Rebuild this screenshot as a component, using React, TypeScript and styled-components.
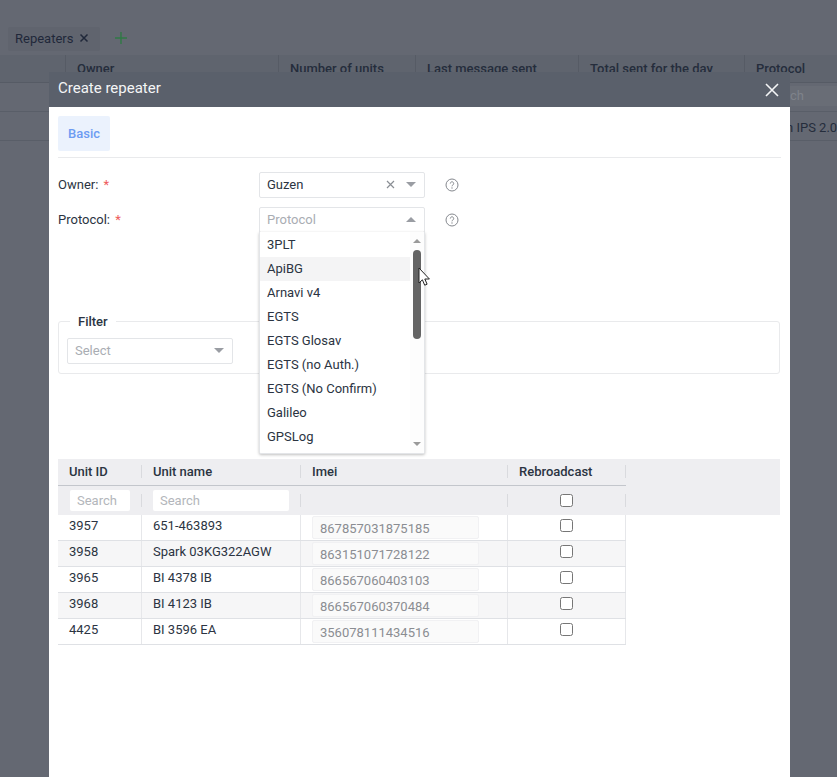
import React from 'react';
import styled, { createGlobalStyle } from 'styled-components';

const GlobalStyle = createGlobalStyle`
    html, body { margin: 0; padding: 0; height: 100%; }
    body { font-family: Roboto, "Liberation Sans", sans-serif; font-size: 13px; overflow: hidden; }
`;

const Page = styled.div`
    position: relative;
    width: 837px;
    height: 777px;
    overflow: hidden;
    background: #646872;
    color: #2b3442;
    padding-top: 27px;
    box-sizing: border-box;
`;

/* ---- dimmed page behind the dialog ---- */
const TabBar = styled.div`
    display: flex;
    align-items: center;
    height: 24px;
    padding-left: 8px;
    margin-bottom: 4px;
`;

const Tab = styled.div`
    display: flex;
    align-items: center;
    gap: 6px;
    height: 24px;
    width: 92px;
    box-sizing: border-box;
    padding: 0 0 2px 7px;
    background: #60646e;
    border-radius: 2px;
    font-size: 13px;
    color: #20283a;
`;

const AddButton = styled.div`
    margin: -2px 0 0 15px;
    display: flex;
`;

const BackHead = styled.div`
    display: grid;
    grid-template-columns: 65px 213px 137px 163px 166px 1fr;
    height: 27px;
    background: #5f646e;
    border-bottom: 1px solid #565b65;
`;

const BackHeadCell = styled.div`
    padding: 6px 0 0 11px;
    font-size: 13px;
    font-weight: 500;
    color: #252d3c;
    border-left: 1px solid #565b65;
    &:first-child { border-left: none; }
`;

const BackRow = styled.div`
    height: ${p => p.$h}px;
    box-sizing: border-box;
    border-bottom: 1px solid #595e68;
`;

const BackSearch = styled.div`
    margin-left: 755px;
    margin-top: 3px;
    height: 20px;
    width: 82px;
    background: #696d76;
    font-size: 13px;
    line-height: 20px;
    color: #7f838b;
    padding-left: 35px;
    box-sizing: border-box;
`;

const BackCell = styled.div`
    padding: 8px 0 0 786px;
    font-size: 13px;
    white-space: nowrap;
    color: #252d3c;
`;

/* ---- dialog ---- */
const Dialog = styled.div`
    position: absolute;
    left: 49px;
    top: 72px;
    width: 741px;
    bottom: 0;
    display: flex;
    flex-direction: column;
`;

const DialogHeader = styled.div`
    display: flex;
    align-items: center;
    justify-content: space-between;
    height: 35px;
    flex-shrink: 0;
    box-sizing: border-box;
    padding: 0 11px 3px 9px;
    background: #5a606b;
    color: #f4f5f6;
    font-size: 15px;
`;

const CloseIcon = styled.svg`
    display: block;
    margin-top: 3px;
`;

const DialogBody = styled.div`
    position: relative;
    flex: 1;
    background: #fff;
    padding: 9px 9px 0;
`;

const TabStrip = styled.div`
    height: 41px;
    border-bottom: 1px solid #e9eaec;
`;

const BasicTab = styled.div`
    display: inline-flex;
    align-items: center;
    justify-content: center;
    width: 52px;
    height: 35px;
    background: #ebf2fd;
    border-radius: 2px;
    color: #6d9cf2;
    font-size: 13px;
    font-weight: 500;
`;

const FormRow = styled.div`
    display: flex;
    align-items: center;
    height: 26px;
    margin-top: ${p => p.$top}px;
`;

const Label = styled.div`
    width: 201px;
    flex-shrink: 0;
    font-size: 13px;
    color: #2b3442;
    margin-top: -2px;
    span { color: #ee5b5b; margin-left: 2px; }
`;

const SelectBox = styled.div`
    display: flex;
    align-items: center;
    width: ${p => p.$w}px;
    height: 26px;
    box-sizing: border-box;
    padding: 0 8px 1px 7px;
    border: 1px solid #e3e5e8;
    border-radius: 2px;
    background: #fff;
    font-size: 13px;
    color: ${p => (p.$placeholder ? '#a9adb3' : '#2b3442')};
`;

const SelectText = styled.div`
    flex: 1;
`;

const ClearMark = styled.svg`
    margin-right: 11px;
    display: block;
`;

const Caret = styled.div`
    width: 0;
    height: 0;
    border-left: 5px solid transparent;
    border-right: 5px solid transparent;
    ${p => (p.$up ? 'border-bottom: 5px solid #9a9da3;' : 'border-top: 5px solid #9a9da3;')}
`;

const HelpIcon = styled.svg`
    display: block;
    margin-left: 20px;
`;

const FilterSet = styled.fieldset`
    margin: 81px 0 0;
    padding: 0 8px;
    height: 60px;
    box-sizing: border-box;
    width: 722px;
    border: 1px solid #e9eaec;
    border-radius: 3px;
    legend {
        margin-left: 3px;
        padding: 0 8px;
        font-size: 13px;
        font-weight: 500;
        color: #2b3442;
        line-height: 15px;
    }
`;

const FilterInner = styled.div`
    margin-top: 9px;
`;

/* ---- open dropdown ---- */
const Dropdown = styled.div`
    position: absolute;
    left: 210px;
    top: 125px;
    width: 166px;
    height: 222px;
    box-sizing: border-box;
    background: #fff;
    border: 1px solid #e3e5e8;
    border-top: none;
    border-radius: 0 0 2px 2px;
    box-shadow: 0 1px 3px rgba(0, 0, 0, 0.25);
`;

const Option = styled.div`
    height: 24px;
    line-height: 24px;
    width: 151px;
    padding-left: 7px;
    box-sizing: border-box;
    font-size: 13px;
    color: #2b3442;
    background: ${p => (p.$hover ? '#f4f4f5' : 'transparent')};
`;

const OptionList = styled.div`
    padding-top: 1px;
`;

const ScrollTrack = styled.div`
    position: absolute;
    right: 0;
    top: 0;
    bottom: 0;
    width: 14px;
    background: #fdfdfd;
`;

const ScrollThumb = styled.div`
    position: absolute;
    left: 3px;
    top: 18px;
    width: 8px;
    height: 89px;
    border-radius: 4px;
    background: #646464;
`;

const ScrollArrow = styled.div`
    position: absolute;
    left: 3px;
    ${p => (p.$up ? 'top: 7px; border-bottom: 4px solid #9a9a9a;' : 'bottom: 7px; border-top: 4px solid #9a9a9a;')}
    width: 0;
    height: 0;
    border-left: 4px solid transparent;
    border-right: 4px solid transparent;
`;

const Cursor = styled.svg`
    position: absolute;
    left: 369px;
    top: 160px;
`;

/* ---- units table ---- */
const TableBlock = styled.div`
    margin-top: 85px;
    width: 722px;
`;

const HeadBand = styled.div`
    background: #eeeef1;
    height: 56px;
`;

const Columns = `
    display: grid;
    grid-template-columns: 84px 159px 207px 118px;
    width: 568px;
`;

const HeadRow = styled.div`
    ${Columns}
    height: 27px;
    box-sizing: border-box;
    border-bottom: 1px solid #c3c6cc;
`;

const HeadCell = styled.div`
    display: flex;
    align-items: center;
    padding: 0 0 2px 11px;
    font-size: 13px;
    font-weight: 500;
    color: #2b3442;
    position: relative;
    &::after {
        content: '';
        position: absolute;
        right: 0;
        top: 6px;
        height: 13px;
        width: 1px;
        background: #d9dade;
    }
`;

const FilterRow = styled.div`
    ${Columns}
    height: 29px;
`;

const FilterCell = styled.div`
    position: relative;
    display: flex;
    align-items: center;
    justify-content: ${p => (p.$center ? 'center' : 'flex-start')};
    padding: 0 12px 1px ${p => (p.$first ? 12 : 11)}px;
    &::after {
        content: '';
        position: absolute;
        right: 0;
        top: 8px;
        height: 13px;
        width: 1px;
        background: #d9dade;
    }
`;

const SearchBox = styled.div`
    width: 100%;
    height: 21px;
    line-height: 21px;
    box-sizing: border-box;
    padding-left: 7px;
    background: #fff;
    border-radius: 2px;
    font-size: 13px;
    color: #b3b6bb;
`;

const BodyRow = styled.div`
    ${Columns}
    height: 26px;
    box-sizing: border-box;
    border-bottom: 1px solid #dfe1e5;
    background: ${p => (p.$alt ? '#f6f6f7' : '#fff')};
`;

const BodyCell = styled.div`
    padding: 3px 0 0 11px;
    font-size: 13px;
    color: #2b3442;
    border-right: 1px solid #e6e7ea;
    white-space: nowrap;
`;

const ImeiBox = styled.div`
    margin: -2px 0 0 0;
    width: 167px;
    height: 23px;
    line-height: 23px;
    box-sizing: border-box;
    padding-left: 7px;
    background: #fafafa;
    border: 1px solid #f1f1f3;
    border-radius: 2px;
    font-size: 13px;
    color: #8b8d92;
`;

const CheckCell = styled.div`
    display: flex;
    justify-content: center;
    border-right: 1px solid #e6e7ea;
    padding-top: 4px;
`;

const Check = styled.input.attrs({ type: 'checkbox' })`
    margin: 0;
    width: 13px;
    height: 13px;
    ${p => (p.$head ? 'margin-top: 1px;' : '')}
`;

interface Unit {
    id: string;
    name: string;
    imei: string;
}

const units: Unit[] = [
    { id: '3957', name: '651-463893', imei: '867857031875185' },
    { id: '3958', name: 'Spark 03KG322AGW', imei: '863151071728122' },
    { id: '3965', name: 'BI 4378 IB', imei: '866567060403103' },
    { id: '3968', name: 'BI 4123 IB', imei: '866567060370484' },
    { id: '4425', name: 'BI 3596 EA', imei: '356078111434516' },
];

const protocols = ['3PLT', 'ApiBG', 'Arnavi v4', 'EGTS', 'EGTS Glosav', 'EGTS (no Auth.)', 'EGTS (No Confirm)', 'Galileo', 'GPSLog'];

const Help = () => (
    <HelpIcon width="14" height="14" viewBox="0 0 14 14" fill="none">
        <circle cx="7" cy="7" r="6" stroke="#85888e" strokeWidth="1" />
        <path d="M5.3 5.5a1.7 1.7 0 1 1 2.6 1.45c-.6.4-.9.7-.9 1.35" stroke="#85888e" strokeWidth="1" />
        <circle cx="7" cy="10" r=".65" fill="#85888e" />
    </HelpIcon>
);

const App: React.FC = () => {
    return (
        <Page>
            <GlobalStyle />

            <TabBar>
                <Tab>
                    Repeaters
                    <svg width="10" height="10" viewBox="0 0 10 10" fill="none">
                        <path d="M1.5 1.5l7 7M8.5 1.5l-7 7" stroke="#20283a" strokeWidth="1.5" />
                    </svg>
                </Tab>
                <AddButton>
                    <svg width="12" height="12" viewBox="0 0 12 12" fill="none">
                        <path d="M6 0v12M0 6h12" stroke="#2f7a45" strokeWidth="1.4" />
                    </svg>
                </AddButton>
            </TabBar>

            <BackHead>
                <BackHeadCell />
                <BackHeadCell>Owner</BackHeadCell>
                <BackHeadCell>Number of units</BackHeadCell>
                <BackHeadCell>Last message sent</BackHeadCell>
                <BackHeadCell>Total sent for the day</BackHeadCell>
                <BackHeadCell>Protocol</BackHeadCell>
            </BackHead>
            <BackRow $h={26}>
                <BackSearch>ch</BackSearch>
            </BackRow>
            <BackRow $h={29}>
                <BackCell>n IPS 2.0</BackCell>
            </BackRow>

            <Dialog>
                <DialogHeader>
                    Create repeater
                    <CloseIcon width="14" height="14" viewBox="0 0 14 14" fill="none">
                        <path d="M1 1l12 12M13 1L1 13" stroke="#f4f5f6" strokeWidth="1.6" />
                    </CloseIcon>
                </DialogHeader>

                <DialogBody>
                    <TabStrip>
                        <BasicTab>Basic</BasicTab>
                    </TabStrip>

                    <FormRow $top={14}>
                        <Label>Owner:<span> *</span></Label>
                        <SelectBox $w={166}>
                            <SelectText>Guzen</SelectText>
                            <ClearMark width="9" height="9" viewBox="0 0 9 9" fill="none">
                                <path d="M1 1l7 7M8 1L1 8" stroke="#8a8e94" strokeWidth="1.2" />
                            </ClearMark>
                            <Caret />
                        </SelectBox>
                        <Help />
                    </FormRow>

                    <FormRow $top={9}>
                        <Label>Protocol:<span> *</span></Label>
                        <SelectBox $w={166} $placeholder>
                            <SelectText>Protocol</SelectText>
                            <Caret $up />
                        </SelectBox>
                        <Help />
                    </FormRow>

                    <FilterSet>
                        <legend>Filter</legend>
                        <FilterInner>
                            <SelectBox $w={166} $placeholder>
                                <SelectText>Select</SelectText>
                                <Caret />
                            </SelectBox>
                        </FilterInner>
                    </FilterSet>

                    <TableBlock>
                        <HeadBand>
                            <HeadRow>
                                <HeadCell>Unit ID</HeadCell>
                                <HeadCell>Unit name</HeadCell>
                                <HeadCell>Imei</HeadCell>
                                <HeadCell>Rebroadcast</HeadCell>
                            </HeadRow>
                            <FilterRow>
                                <FilterCell $first><SearchBox>Search</SearchBox></FilterCell>
                                <FilterCell><SearchBox>Search</SearchBox></FilterCell>
                                <FilterCell />
                                <FilterCell $center><Check $head /></FilterCell>
                            </FilterRow>
                        </HeadBand>
                        {units.map((u, i) => (
                            <BodyRow key={u.id} $alt={i % 2 === 1}>
                                <BodyCell>{u.id}</BodyCell>
                                <BodyCell>{u.name}</BodyCell>
                                <BodyCell><ImeiBox>{u.imei}</ImeiBox></BodyCell>
                                <CheckCell><Check /></CheckCell>
                            </BodyRow>
                        ))}
                    </TableBlock>

                    <Dropdown>
                        <OptionList>
                            {protocols.map(p => (
                                <Option key={p} $hover={p === 'ApiBG'}>{p}</Option>
                            ))}
                        </OptionList>
                        <ScrollTrack>
                            <ScrollArrow $up />
                            <ScrollThumb />
                            <ScrollArrow />
                        </ScrollTrack>
                    </Dropdown>

                    <Cursor width="13" height="20" viewBox="0 0 13 20">
                        <path d="M1 1v15l3.4-3.2 2.3 5.4 2.4-1-2.3-5.2h4.6z" fill="#fff" stroke="#222" strokeWidth="1" />
                    </Cursor>
                </DialogBody>
            </Dialog>
        </Page>
    );
};

export default App;
